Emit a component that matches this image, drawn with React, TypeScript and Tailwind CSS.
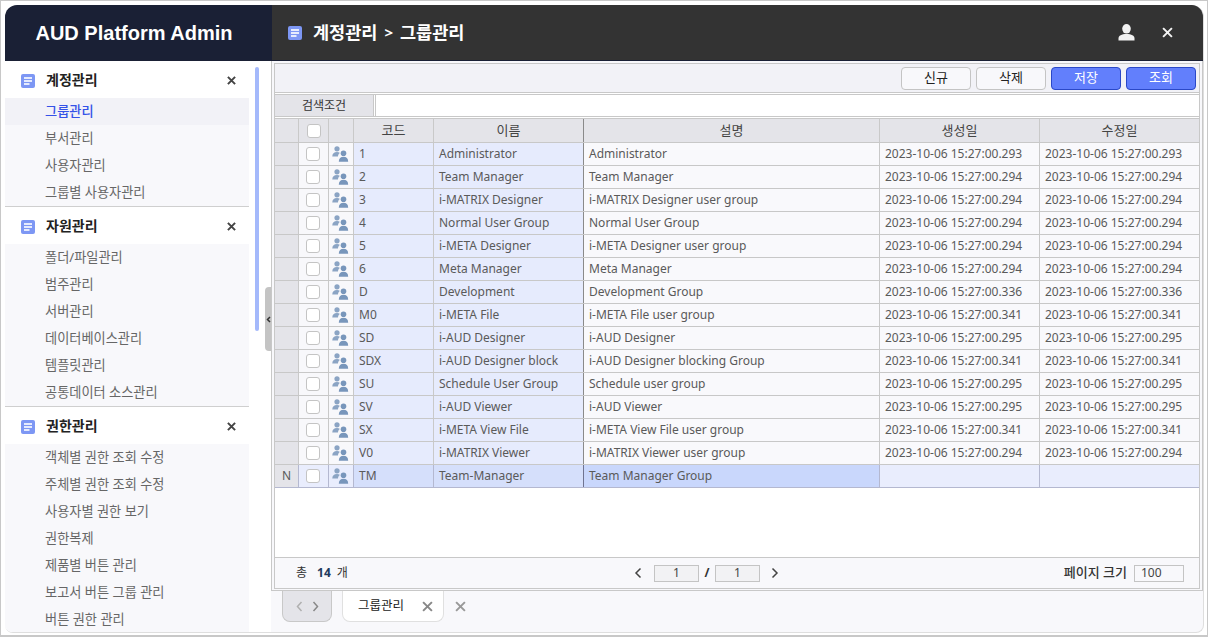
import React from "react";

const F = { fontFamily: '"Noto Sans","Noto Sans CJK KR",sans-serif' };

function DocIcon({ size = 14 }: { size?: number }) {
  return (
    <svg width={size} height={size} viewBox="0 0 14 14" className="shrink-0">
      <rect width="14" height="14" rx="2" fill="#7d97f4" />
      <rect x="3" y="3.2" width="8" height="1.6" fill="#fff" />
      <rect x="3" y="6.2" width="8" height="1.6" fill="#fff" />
      <rect x="3" y="9.2" width="5.5" height="1.6" fill="#fff" />
    </svg>
  );
}

function XIcon({ size = 9, color = "#444", w = 2.2 }: { size?: number; color?: string; w?: number }) {
  return (
    <svg width={size} height={size} viewBox="0 0 10 10" className="shrink-0">
      <path d="M1 1L9 9M9 1L1 9" stroke={color} strokeWidth={w} fill="none" />
    </svg>
  );
}

function GroupIcon() {
  return (
    <svg width="17" height="16" viewBox="0 0 17 16">
      <g fill="#8ba4c4">
        <circle cx="5" cy="2.800" r="2.600" />
        <path d="M0.300 10.500C0.300 7.500 2 6 5 6c1.200 0 2.200.3 3 .9C6.600 7.500 6 9 6 10.500z" />
      </g>
      <g fill="#7896bb">
        <circle cx="11.500" cy="7.300" r="2.800" />
        <path d="M6.800 15.800c0-3.300 1.800-5 4.700-5s4.700 1.700 4.700 5z" />
      </g>
    </svg>
  );
}

const sections = [
  { title: "계정관리", items: ["그룹관리", "부서관리", "사용자관리", "그룹별 사용자관리"] },
  { title: "자원관리", items: ["폴더/파일관리", "범주관리", "서버관리", "데이터베이스관리", "템플릿관리", "공통데이터 소스관리"] },
  { title: "권한관리", items: ["객체별 권한 조회 수정", "주체별 권한 조회 수정", "사용자별 권한 보기", "권한복제", "제품별 버튼 관리", "보고서 버튼 그룹 관리", "버튼 권한 관리"] },
];

const rows = [
  ["1", "Administrator", "Administrator", "2023-10-06 15:27:00.293", "2023-10-06 15:27:00.293"],
  ["2", "Team Manager", "Team Manager", "2023-10-06 15:27:00.294", "2023-10-06 15:27:00.294"],
  ["3", "i-MATRIX Designer", "i-MATRIX Designer user group", "2023-10-06 15:27:00.294", "2023-10-06 15:27:00.294"],
  ["4", "Normal User Group", "Normal User Group", "2023-10-06 15:27:00.294", "2023-10-06 15:27:00.294"],
  ["5", "i-META Designer", "i-META Designer user group", "2023-10-06 15:27:00.294", "2023-10-06 15:27:00.294"],
  ["6", "Meta Manager", "Meta Manager", "2023-10-06 15:27:00.294", "2023-10-06 15:27:00.294"],
  ["D", "Development", "Development Group", "2023-10-06 15:27:00.336", "2023-10-06 15:27:00.336"],
  ["M0", "i-META File", "i-META File user group", "2023-10-06 15:27:00.341", "2023-10-06 15:27:00.341"],
  ["SD", "i-AUD Designer", "i-AUD Designer", "2023-10-06 15:27:00.295", "2023-10-06 15:27:00.295"],
  ["SDX", "i-AUD Designer block", "i-AUD Designer blocking Group", "2023-10-06 15:27:00.341", "2023-10-06 15:27:00.341"],
  ["SU", "Schedule User Group", "Schedule user group", "2023-10-06 15:27:00.295", "2023-10-06 15:27:00.295"],
  ["SV", "i-AUD Viewer", "i-AUD Viewer", "2023-10-06 15:27:00.295", "2023-10-06 15:27:00.295"],
  ["SX", "i-META View File", "i-META View File user group", "2023-10-06 15:27:00.341", "2023-10-06 15:27:00.341"],
  ["V0", "i-MATRIX Viewer", "i-MATRIX Viewer user group", "2023-10-06 15:27:00.294", "2023-10-06 15:27:00.294"],
];

const gridCols = "grid grid-cols-[24px_30px_25px_80px_150px_296px_160px_159px]";
const hCell = "flex items-center justify-center border-r border-[#c9c9c9] bg-[#e4e4e9] text-[#444] text-[13px]";
const cell = "flex items-center pl-[5px] border-r border-[#c9c9c9] overflow-hidden whitespace-nowrap";

function Check() {
  return <span className="block w-[14px] h-[14px] rounded-[3px] border border-[#c4c4c4] bg-white" />;
}

function Btn({ label, primary }: { label: string; primary?: boolean }) {
  return (
    <button
      className={
        "w-[70px] h-[23px] rounded-[4px] border text-[13px] flex items-center justify-center " +
        (primary ? "bg-[#627ffc] border-[#2a48c8] text-white" : "bg-[#f8f8fb] border-[#c4c4c4] text-[#222]")
      }
    >
      {label}
    </button>
  );
}

export default function App() {
  return (
    <div style={F} className="w-[1208px] h-[637px] bg-white border-x border-b-2 border-t border-[#c8c8c8] pl-[4px] pr-[3px] pt-[4px] pb-[2px] overflow-hidden text-[12px]">
      <div className="w-full h-full flex flex-col rounded-t-[12px] rounded-b-[8px] border-b border-r border-[#dedede] bg-[#f8f8fb] overflow-hidden">
        <div className="h-[56px] flex shrink-0 border-b border-[#1a2035]">
          <div className="w-[267px] bg-[#1a2035] flex items-center justify-center pr-[9px]">
            <span className="text-[20px] font-bold text-white" style={{ fontFamily: '"Liberation Sans",sans-serif' }}>AUD Platform Admin</span>
          </div>
          <div className="flex-1 bg-[#333] flex items-center pl-[16px] pr-[30px]">
            <DocIcon />
            <span className="ml-[11px] text-[17.5px] font-bold text-white leading-none">계정관리</span>
            <span className="ml-[7px] text-[15px] font-bold text-white leading-none">&gt;</span>
            <span className="ml-[7px] text-[17.5px] font-bold text-white leading-none">그룹관리</span>
            <svg width="17" height="17" viewBox="0 0 17 17" className="ml-auto mr-[27px]" fill="#f2f2f2">
              <ellipse cx="8.500" cy="4.800" rx="4.300" ry="4.800" />
              <path d="M0.500 16.500v-2c0-3 3-4.500 8-4.500s8 1.500 8 4.500v2z" />
            </svg>
            <XIcon size={11} color="#f2f2f2" w={1.800} />
          </div>
        </div>

        <div className="flex-1 flex min-h-0">
          <aside className="w-[266px] bg-white flex shrink-0 relative overflow-hidden">
            <div className="w-[244px] shrink-0">
              {sections.map((s, si) => (
                <div key={s.title} className={si > 0 ? "border-t border-[#cfcfcf]" : ""}>
                  <div className="h-[37px] flex items-center pl-[16px] pr-[13px] pt-[2px] bg-white">
                    <DocIcon />
                    <span className="ml-[11px] mb-[2px] text-[14px] font-bold text-[#222]">{s.title}</span>
                    <span className="ml-auto"><XIcon /></span>
                  </div>
                  {s.items.map((it, i) => (
                    <div
                      key={it}
                      className={
                        "h-[27px] flex items-center pl-[40px] text-[13.2px] " +
                        (si === 0 && i === 0 ? "bg-[#f2f2f7] text-[#3552e8] font-medium" : "bg-[#f8f8fb] text-[#666]")
                      }
                    >
                      {it}
                    </div>
                  ))}
                </div>
              ))}
            </div>
            <div className="absolute left-[250px] top-[6px] w-[4px] h-[264px] rounded-full bg-[#a4b9fb]" />
            <div className="absolute left-[260px] top-[226px] w-[6px] h-[64px] rounded-l-[4px] bg-[#c4c4c4] flex items-center justify-center">
              <svg width="5" height="7" viewBox="0 0 5 7"><path d="M4 1L1.500 3.500L4 6" stroke="#333" strokeWidth="1.500" fill="none" /></svg>
            </div>
          </aside>

          <main className="flex-1 min-w-0 flex flex-col">
            <div className="h-[530px] shrink-0 border-x border-b border-[#c8c8c8] pt-[2px] pb-[1px] px-[2px]">
              <div className="h-[526px] border border-[#c8c8c8] flex flex-col bg-white">
                <div className="h-[29px] shrink-0 bg-[#f2f2f7] border-b border-[#c8c8c8] flex items-center justify-end gap-[5px] pr-[3px]">
                  <Btn label="신규" />
                  <Btn label="삭제" />
                  <Btn label="저장" primary />
                  <Btn label="조회" primary />
                </div>
                <div className="h-[23px] mt-[1px] shrink-0 flex border-y border-[#c8c8c8]">
                  <div className="w-[99px] bg-[#e4e4e9] flex items-center justify-center text-[#333] border-r border-[#c8c8c8]">검색조건</div>
                  <div className="flex-1 ml-[1px] border-l border-[#c8c8c8]" />
                </div>
                <div className={gridCols + " h-[25px] mt-[1px] shrink-0 border-y border-[#c8c8c8]"}>
                  <div className={hCell} />
                  <div className={hCell}><Check /></div>
                  <div className={hCell} />
                  <div className={hCell}>코드</div>
                  <div className={hCell + " border-r-[#8a8a8a]"}>이름</div>
                  <div className={hCell}>설명</div>
                  <div className={hCell}>생성일</div>
                  <div className={hCell + " border-r-0"}>수정일</div>
                </div>
                <div className="flex-1 min-h-0">
                  {rows.map((r) => (
                    <div key={r[0]} className={gridCols + " h-[23px] border-b border-[#c8c8c8] text-[#5a5a5a]"}>
                      <div className="bg-[#e4e4e9] border-r border-[#c9c9c9]" />
                      <div className="flex items-center justify-center pr-[2px] border-r border-[#c9c9c9] bg-[#f8f8fb]"><Check /></div>
                      <div className="flex items-center justify-center pr-[2px] border-r border-[#c9c9c9] bg-[#f8f8fb]"><GroupIcon /></div>
                      <div className={cell + " bg-[#e6ebfd]"}>{r[0]}</div>
                      <div className={cell + " bg-[#e6ebfd] border-r-[#8a8a8a]"}>{r[1]}</div>
                      <div className={cell + " bg-[#f9f9fc]"}>{r[2]}</div>
                      <div className={cell + " bg-[#f9f9fc]"}>{r[3]}</div>
                      <div className={cell + " bg-[#f9f9fc] border-r-0"}>{r[4]}</div>
                    </div>
                  ))}
                  <div className={gridCols + " h-[23px] border-b border-[#b4b8d0] text-[#5a5a5a]"}>
                    <div className="bg-[#e4e4e9] border-r border-[#b4b8d0] flex items-center justify-center">N</div>
                    <div className="flex items-center justify-center pr-[2px] border-r border-[#b4b8d0] bg-[#e9edfd]"><Check /></div>
                    <div className="flex items-center justify-center pr-[2px] border-r border-[#b4b8d0] bg-[#e9edfd]"><GroupIcon /></div>
                    <div className={cell + " bg-[#d5dffb] border-r-[#b4b8d0]"}>TM</div>
                    <div className={cell + " bg-[#d5dffb] border-r-[#6f7390]"}>Team-Manager</div>
                    <div className={cell + " bg-[#c9d7fc] border-r-[#b4b8d0]"}>Team Manager Group</div>
                    <div className={cell + " bg-[#e9edfd] border-r-[#b4b8d0]"} />
                    <div className={cell + " bg-[#e9edfd] border-r-0"} />
                  </div>
                </div>
                <div className="h-[31px] shrink-0 bg-[#f8f8fb] border-t border-[#c8c8c8] relative flex items-center pl-[21px] pr-[15px]">
                  <span className="text-[#333]">총</span>
                  <span className="ml-[10px] font-bold text-[#1f3a5f]">14</span>
                  <span className="ml-[6px] text-[#333]">개</span>
                  <div className="absolute left-[359px] top-[6px] flex items-center">
                    <svg width="8" height="12" viewBox="0 0 8 12"><path d="M6.500 1.500L2 6L6.500 10.500" stroke="#444" strokeWidth="1.500" fill="none" /></svg>
                    <span className="ml-[12px] w-[45px] h-[17px] bg-[#f2f2f4] border border-[#c4c4c4] flex items-center justify-center text-[#444]">1</span>
                    <span className="w-[16px] text-center font-bold text-[#333]">/</span>
                    <span className="w-[45px] h-[17px] bg-[#f2f2f4] border border-[#c4c4c4] flex items-center justify-center text-[#444]">1</span>
                    <svg width="8" height="12" viewBox="0 0 8 12" className="ml-[11px]"><path d="M1.500 1.500L6 6L1.500 10.500" stroke="#444" strokeWidth="1.500" fill="none" /></svg>
                  </div>
                  <span className="ml-auto text-[13px] font-medium text-[#333]">페이지 크기</span>
                  <span className="ml-[7px] w-[50px] h-[17px] bg-[#f8f8fb] border border-[#c4c4c4] flex items-center pl-[6px] text-[#444]">100</span>
                </div>
              </div>
            </div>
            <div className="flex-1 flex items-start pl-[11px]">
              <div className="w-[50px] h-[31px] bg-[#e4e4e9] border border-t-0 border-[#c8c8c8] rounded-b-[8px] flex items-center justify-center gap-[9px]">
                <svg width="7" height="11" viewBox="0 0 7 11"><path d="M5.500 1L1.500 5.500L5.500 10" stroke="#b0b0b0" strokeWidth="1.500" fill="none" /></svg>
                <svg width="7" height="11" viewBox="0 0 7 11"><path d="M1.500 1L5.500 5.500L1.500 10" stroke="#888" strokeWidth="1.500" fill="none" /></svg>
              </div>
              <div className="ml-[10px] w-[102px] h-[31px] bg-white border border-t-0 border-[#e0e0e0] rounded-b-[8px] flex items-center pl-[15px] text-[12.5px] text-[#222]">
                그룹관리
                <span className="ml-[18px]"><XIcon size={11} color="#888" w={1.800} /></span>
              </div>
              <span className="ml-[11px] mt-[10px]"><XIcon size={11} color="#999" w={1.800} /></span>
            </div>
          </main>
        </div>
      </div>
    </div>
  );
}
